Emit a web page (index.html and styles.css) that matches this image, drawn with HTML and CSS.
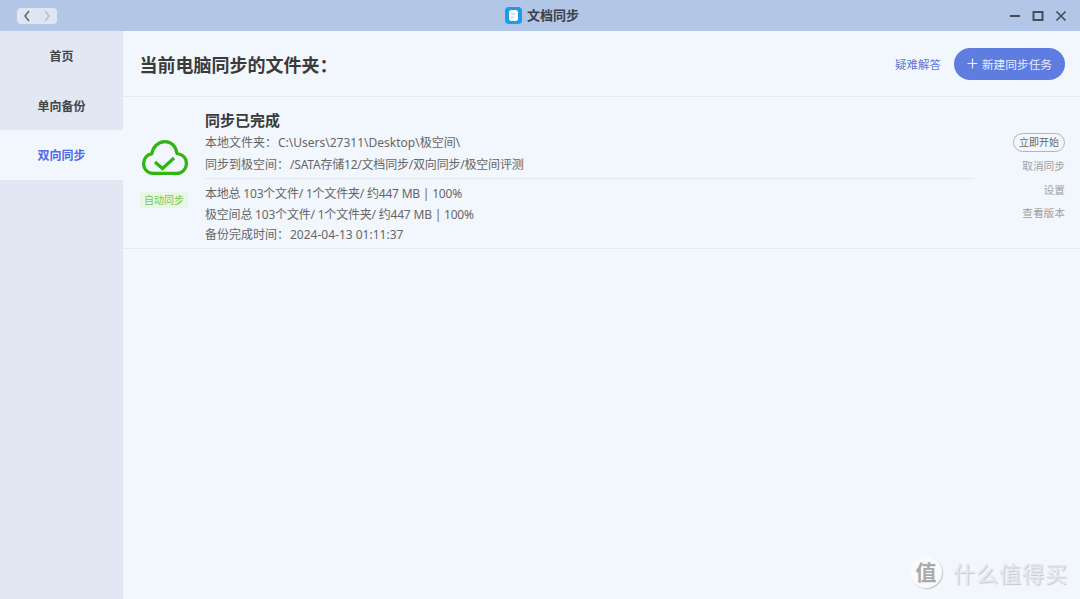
FILE: index.html
```html
<!DOCTYPE html>
<html lang="zh-CN">
<head>
  <meta charset="UTF-8">
  <title>文档同步</title>
  <link rel="stylesheet" href="styles.css">
</head>
<body>
  <div class="window">
    <div class="titlebar">
      <div class="nav-btns">
        <svg width="20" height="16" viewBox="0 0 20 16"><path d="M12 3 L8 8 L12 13" fill="none" stroke="#555b66" stroke-width="1.4"/></svg>
        <svg width="20" height="16" viewBox="0 0 20 16"><path d="M8 3 L12 8 L8 13" fill="none" stroke="#b9bec8" stroke-width="1.4"/></svg>
      </div>
      <div class="app-title">
        <svg width="17" height="17" viewBox="0 0 17 17">
          <rect width="17" height="17" rx="4" fill="#1b9be8"/>
          <rect x="4" y="3" width="9" height="11" rx="2.5" fill="#fff"/>
          <path d="M6 7 H10 M6 10 H9" stroke="#8fd0f5" stroke-width="1"/>
        </svg>
        <span>文档同步</span>
      </div>
      <div class="win-btns">
        <svg width="12" height="12" viewBox="0 0 12 12"><path d="M1 6 H11" stroke="#474c57" stroke-width="2"/></svg>
        <svg width="12" height="12" viewBox="0 0 12 12"><rect x="1.5" y="2" width="9" height="8" fill="none" stroke="#474c57" stroke-width="2"/></svg>
        <svg width="12" height="12" viewBox="0 0 12 12"><path d="M1.5 1.5 L10.5 10.5 M10.5 1.5 L1.5 10.5" stroke="#474c57" stroke-width="1.7"/></svg>
      </div>
    </div>

    <div class="body-row">
      <div class="sidebar">
        <div class="side-item">首页</div>
        <div class="side-item">单向备份</div>
        <div class="side-item active">双向同步</div>
      </div>

      <div class="main">
        <div class="main-head">
          <h1>当前电脑同步的文件夹：</h1>
          <div class="head-actions">
            <a class="help-link">疑难解答</a>
            <button class="new-task">
              <svg class="plus" width="11" height="11" viewBox="0 0 11 11"><path d="M5.5 0.5 V10.5 M0.5 5.5 H10.5" stroke="#e8edfb" stroke-width="1.2"/></svg>
              新建同步任务
            </button>
          </div>
        </div>

        <div class="task">
          <div class="task-status">
            <svg class="cloud" width="48" height="38" viewBox="0 0 48 38">
              <path d="M13 34.4 C7.5 34.4 3.6 30 3.6 24.5 C3.6 19 7.5 15.3 11.8 14.8 C13 7.5 18.5 2.6 25 2.6 C31.5 2.6 36 7.5 37 14.5 C42.5 15.3 46.4 19 46.4 24.5 C46.4 30 42 34.4 36.5 34.4 Z" fill="none" stroke="#2fb50f" stroke-width="3.2" stroke-linejoin="round"/>
              <path d="M15 23 L22.5 29.5 L34 19" fill="none" stroke="#2fb50f" stroke-width="3.2"/>
            </svg>
            <span class="auto-tag">自动同步</span>
          </div>

          <div class="task-info">
            <h2>同步已完成</h2>
            <p class="path-row"><span class="label-a">本地文件夹：</span>C:\Users\27311\Desktop\极空间\</p>
            <p class="path-row"><span class="label-b">同步到极空间：</span><span class="tight">/SATA存储12/文档同步/双向同步/极空间评测</span></p>
            <div class="stats">
              <p class="tight">本地总 103个文件/ 1个文件夹/ 约447 MB | 100%</p>
              <p class="tight">极空间总 103个文件/ 1个文件夹/ 约447 MB | 100%</p>
              <p><span class="label-b">备份完成时间：</span>2024-04-13 01:11:37</p>
            </div>
          </div>

          <div class="task-actions">
            <a class="start-btn">立即开始</a>
            <a>取消同步</a>
            <a>设置</a>
            <a>查看版本</a>
          </div>
        </div>
      </div>
    </div>

    <div class="watermark">
      <span class="wm-badge">值</span>
      <span class="wm-text">什么值得买</span>
    </div>
  </div>
</body>
</html>
```

FILE: styles.css
```css
html, body {
  margin: 0;
  padding: 0;
  background: #b2c6e8;
}
body {
  font-family: "Noto Sans", "Noto Sans CJK SC", sans-serif;
  color: #555;
}
h1, h2, p {
  margin: 0;
}
.window {
  position: relative;
  width: 1080px;
  height: 599px;
  overflow: hidden;
}

/* title bar */
.titlebar {
  height: 31px;
  background: #b2c6e8;
  display: flex;
  align-items: center;
  justify-content: space-between;
  padding: 0 13px 0 17px;
  position: relative;
}
.nav-btns {
  display: flex;
  width: 40px;
  height: 16px;
  background: #dfe6f3;
  border-radius: 4px;
}
.app-title {
  position: absolute;
  left: 505px;
  top: 7px;
  display: flex;
  align-items: center;
  gap: 5px;
  font-size: 13px;
  font-weight: 700;
  color: #3a3f48;
  line-height: 17px;
}
.win-btns {
  display: flex;
  gap: 11px;
}

/* layout */
.body-row {
  display: flex;
  height: 568px;
}
.sidebar {
  width: 123px;
  background: #e1e7f3;
  flex-shrink: 0;
}
.side-item {
  height: 49.5px;
  line-height: 51px;
  text-align: center;
  font-size: 12px;
  font-weight: 700;
  color: #444;
}
.side-item.active {
  background: #f2f6fd;
  color: #4f6ae8;
}
.main {
  flex: 1;
  background: #f2f6fd;
}
.main-head {
  height: 66px;
  box-sizing: border-box;
  display: flex;
  align-items: center;
  justify-content: space-between;
  padding: 0 15px 0 16.5px;
  border-bottom: 1px solid #e5e9f0;
}
.main-head h1 {
  font-size: 18px;
  font-weight: 700;
  color: #3a3a3a;
}
.head-actions {
  display: flex;
  align-items: center;
  gap: 13px;
}
.help-link {
  font-size: 11.5px;
  color: #5a78d6;
}
.new-task {
  width: 111px;
  height: 32px;
  padding: 0;
  border: 0;
  border-radius: 16px;
  background: #5f7ce0;
  color: #e8edfb;
  font-family: inherit;
  font-size: 11.7px;
  display: flex;
  align-items: center;
  justify-content: center;
  gap: 4px;
}

/* task row */
.task {
  height: 152px;
  box-sizing: border-box;
  display: flex;
  padding: 12px 15px 0 17px;
  border-bottom: 1px solid #e5e9f0;
}
.task-status {
  width: 48px;
  flex-shrink: 0;
  margin-right: 17px;
  display: flex;
  flex-direction: column;
  align-items: center;
  padding-top: 30px;
}
.cloud {
  display: block;
}
.auto-tag {
  margin-top: 15px;
  font-size: 10px;
  line-height: 16px;
  padding: 0 4px;
  color: #6fc84f;
  background: #e9f6e6;
  border-radius: 2px;
  white-space: nowrap;
}
.task-info {
  width: 769px;
  flex-shrink: 0;
  font-size: 12px;
  color: #666;
}
.task-info h2 {
  font-size: 15px;
  font-weight: 700;
  color: #3a3a3a;
  line-height: 23px;
}
.path-row {
  line-height: 22px;
}
.label-a {
  display: inline-block;
  width: 73px;
}
.label-b {
  display: inline-block;
  width: 85px;
}
.tight {
  letter-spacing: -0.2px;
}
.stats {
  margin-top: 2px;
  padding-top: 5px;
  border-top: 1px solid #e3e7ee;
}
.stats p {
  line-height: 20.5px;
}
.task-actions {
  flex: 1;
  display: flex;
  flex-direction: column;
  align-items: flex-end;
  font-size: 10.7px;
  color: #a0a0a0;
  padding-top: 24px;
}
.task-actions a {
  line-height: 23.5px;
}
.task-actions .start-btn {
  font-size: 10px;
  line-height: 17px;
  padding: 0 5px;
  border: 1px solid #b5b5b5;
  border-radius: 10px;
  color: #666;
  margin-bottom: 3px;
}

/* watermark */
.watermark {
  position: absolute;
  left: 910px;
  top: 556px;
  display: flex;
  align-items: center;
  gap: 11px;
}
.wm-badge {
  width: 32px;
  height: 32px;
  border-radius: 50%;
  background: #fafafa;
  box-shadow: 1px 1px 1px #c4c6ca;
  color: #a9a9a9;
  font-size: 21px;
  font-weight: 700;
  line-height: 32px;
  text-align: center;
}
.wm-text {
  font-size: 22px;
  letter-spacing: 1px;
  color: #e6e8ec;
  text-shadow: 1px 1px 1px #c4c6ca;
}
```
